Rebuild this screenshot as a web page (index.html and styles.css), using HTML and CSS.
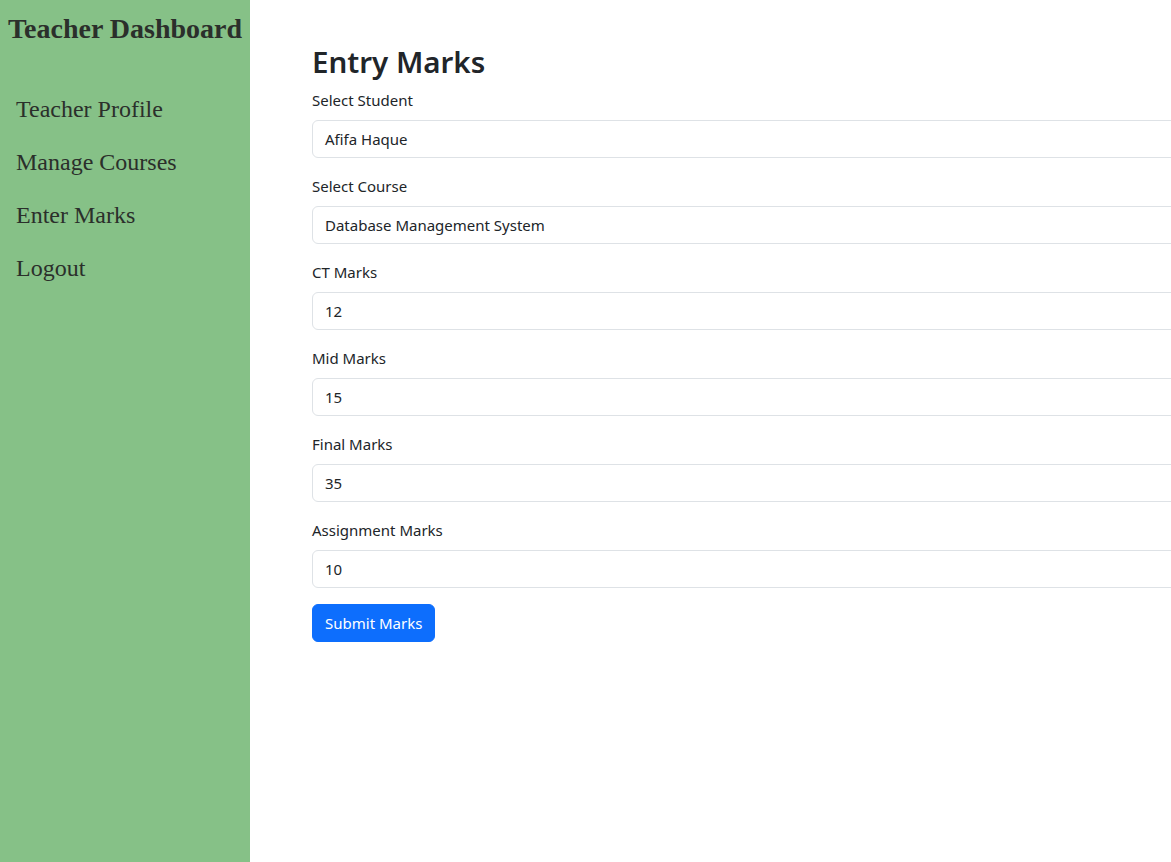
FILE: index.html
```html
<!DOCTYPE html>
<html>
<head>
<meta charset="utf-8">
<link rel="stylesheet" href="styles.css">
</head>
<body>
<div class="layout">
  <aside class="sidebar">
    <h2 class="brand">Teacher Dashboard</h2>
    <nav class="nav">
      <a class="nav-link">Teacher Profile</a>
      <a class="nav-link">Manage Courses</a>
      <a class="nav-link">Enter Marks</a>
      <a class="nav-link">Logout</a>
    </nav>
  </aside>
  <main class="main">
    <h2 class="title">Entry Marks</h2>
    <form class="form">
      <div class="group">
        <label class="label">Select Student</label>
        <div class="control">Afifa Haque</div>
      </div>
      <div class="group">
        <label class="label">Select Course</label>
        <div class="control">Database Management System</div>
      </div>
      <div class="group">
        <label class="label">CT Marks</label>
        <div class="control">12</div>
      </div>
      <div class="group">
        <label class="label">Mid Marks</label>
        <div class="control">15</div>
      </div>
      <div class="group">
        <label class="label">Final Marks</label>
        <div class="control">35</div>
      </div>
      <div class="group">
        <label class="label">Assignment Marks</label>
        <div class="control">10</div>
      </div>
      <button type="button" class="btn">Submit Marks</button>
    </form>
  </main>
</div>
</body>
</html>
```
FILE: styles.css
```css
html, body {
  margin: 0;
  padding: 0;
  height: 100%;
  overflow: hidden;
}
body {
  font-family: "Noto Sans", "Open Sans", sans-serif;
  color: #212529;
  background: #fff;
}
.layout {
  display: flex;
  height: 862px;
}
.sidebar {
  flex: 0 0 250px;
  width: 250px;
  background: #86c187;
  color: #2b2f2b;
  font-family: "Liberation Serif", "Times New Roman", serif;
}
.brand {
  margin: 0;
  padding-top: 12px;
  text-align: center;
  font-size: 28px;
  font-weight: bold;
  line-height: 34px;
  white-space: nowrap;
}
.nav {
  display: flex;
  flex-direction: column;
  padding: 37px 16px 0;
}
.nav-link {
  font-size: 24px;
  line-height: 27px;
  padding: 13px 0;
  color: #2b2f2b;
}
.main {
  flex: 1 1 auto;
  min-width: 0;
  overflow: hidden;
  padding: 42px 0 0 62px;
}
.form {
  width: 1000px;
}
.title {
  margin: 1px 0 7px;
  font-size: 29.5px;
  font-weight: 600;
  line-height: 38px;
}
.group {
  margin-bottom: 16px;
}
.label {
  display: block;
  font-size: 15px;
  line-height: 24px;
  margin-bottom: 8px;
}
.control {
  box-sizing: border-box;
  height: 38px;
  border: 1px solid #dee2e6;
  border-radius: 6px;
  padding: 0 12px;
  font-size: 15px;
  line-height: 36px;
}
.btn {
  font-family: inherit;
  font-size: 15px;
  height: 38px;
  padding: 0 12px;
  color: #fff;
  background: #0d6efd;
  border: 1px solid #0d6efd;
  border-radius: 6px;
}
```
